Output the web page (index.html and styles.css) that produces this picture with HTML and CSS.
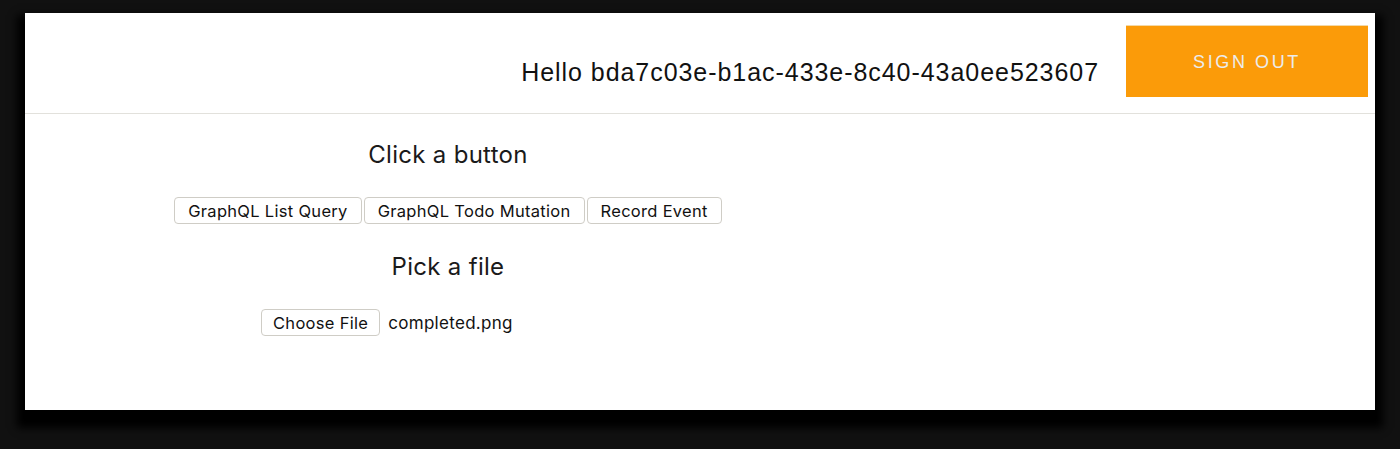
FILE: index.html
```html
<!DOCTYPE html>
<html>
<head>
<meta charset="utf-8">
<link rel="stylesheet" href="styles.css">
</head>
<body>
<div class="window">
  <header class="topbar">
    <span class="greeting">Hello bda7c03e-b1ac-433e-8c40-43a0ee523607</span>
    <button class="signout">SIGN OUT</button>
  </header>
  <main class="content">
    <h2 class="title">Click a button</h2>
    <div class="buttons">
      <button class="btn">GraphQL List Query</button>
      <button class="btn">GraphQL Todo Mutation</button>
      <button class="btn">Record Event</button>
    </div>
    <h2 class="title second">Pick a file</h2>
    <div class="file-row">
      <button class="btn file-btn">Choose File</button>
      <span class="filename">completed.png</span>
    </div>
  </main>
</div>
</body>
</html>
```

FILE: styles.css
```css
html, body {
  margin: 0;
  padding: 0;
  background: #111111;
  height: 100%;
  overflow: hidden;
}
body {
  padding: 13px 25px 0 25px;
  box-sizing: border-box;
}
.window {
  height: 397px;
  background: #ffffff;
  box-shadow: 0 10px 8px 8px #000000;
  font-family: "Liberation Sans", Arial, sans-serif;
  color: #111;
}
.topbar {
  height: 101px;
  box-sizing: border-box;
  border-bottom: 1px solid #e2e1dc;
  display: flex;
  align-items: flex-start;
  justify-content: flex-end;
  padding: 12px 7px 0 0;
}
.greeting {
  font-size: 25px;
  letter-spacing: 0.95px;
  margin-top: 35px;
  line-height: 25px;
  margin-right: 27px;
  color: #111;
}
.signout {
  width: 242px;
  height: 72px;
  background: #fb9b09;
  border: none;
  border-top: 1px solid #f3d9a8;
  color: #ececec;
  font-family: "Liberation Sans", Arial, sans-serif;
  font-size: 18px;
  letter-spacing: 2.6px;
  padding: 1px 0 0 0;
}
.content {
  width: 846px;
  display: flex;
  flex-direction: column;
  align-items: center;
  font-family: Inter, "Liberation Sans", sans-serif;
}
.title {
  font-weight: 400;
  font-size: 24px;
  letter-spacing: 0.3px;
  margin: 27px 0 0 0;
  line-height: 28px;
  color: #1a1a1a;
}
.title.second {
  margin-top: 29px;
}
.buttons {
  display: flex;
  gap: 2px;
  margin-top: 28px;
}
.btn {
  font-family: Inter, "Liberation Sans", sans-serif;
  font-size: 16.5px;
  letter-spacing: 0.3px;
  height: 27px;
  padding: 0 13px;
  background: #ffffff;
  border: 1px solid #cfcdc6;
  border-radius: 4px;
  color: #111;
}
.file-btn {
  padding: 0 11px;
}
.file-row {
  width: 374px;
  display: flex;
  align-items: center;
  gap: 8px;
  margin-top: 28px;
}
.filename {
  font-size: 17px;
  letter-spacing: 0.3px;
  color: #111;
}
```
